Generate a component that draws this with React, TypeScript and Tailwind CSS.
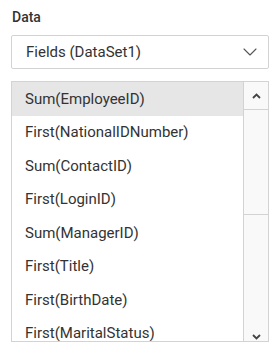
import { ChevronDown } from "lucide-react";

const fields = [
  "Sum(EmployeeID)",
  "First(NationalIDNumber)",
  "Sum(ContactID)",
  "First(LoginID)",
  "Sum(ManagerID)",
  "First(Title)",
  "First(BirthDate)",
  "First(MaritalStatus)",
];

export default function App() {
  return (
    <div className="w-[280px] h-[354px] bg-white pt-[8px] px-[11px] font-['Roboto',sans-serif] text-[#333]">
      <div className="text-[14px] font-medium leading-[18px] pl-[1px] text-[#333]">Data</div>

      {/* Dataset dropdown */}
      <div className="mt-[9px] h-[34px] border border-[#d3d3d3] rounded-[2px] flex items-center pl-[14px] pr-[6px]">
        <span className="flex-1 text-[15px]">Fields (DataSet1)</span>
        <ChevronDown size={24} strokeWidth={1.1} className="text-[#555]" />
      </div>

      {/* Field list */}
      <div className="mt-[12px] h-[261px] border border-[#d3d3d3] flex overflow-hidden">
        <div className="flex-1 flex flex-col">
          {fields.map((f, i) => (
            <div
              key={f}
              className={`h-[33.5px] shrink-0 flex items-center pl-[13px] text-[15px] ${i === 0 ? "bg-[#e6e6e6]" : ""}`}
            >
              {f}
            </div>
          ))}
        </div>
        <div className="w-[25px] border-l border-[#d3d3d3] bg-[#f9f9f9] flex flex-col">
          <div className="h-[28px] border-b border-[#d3d3d3] flex items-center justify-center">
            <svg width="9" height="6" viewBox="0 0 9 6">
              <path d="M1 5L4.5 1.5L8 5" fill="none" stroke="#444" strokeWidth="1.8" />
            </svg>
          </div>
          <div className="h-[105px] border-b border-[#d3d3d3] bg-[#f9f9f9]" />
          <div className="flex-1 flex items-end justify-center pb-[1px]">
            <svg width="9" height="6" viewBox="0 0 9 6">
              <path d="M1 1L4.5 4.5L8 1" fill="none" stroke="#444" strokeWidth="1.8" />
            </svg>
          </div>
        </div>
      </div>
    </div>
  );
}
